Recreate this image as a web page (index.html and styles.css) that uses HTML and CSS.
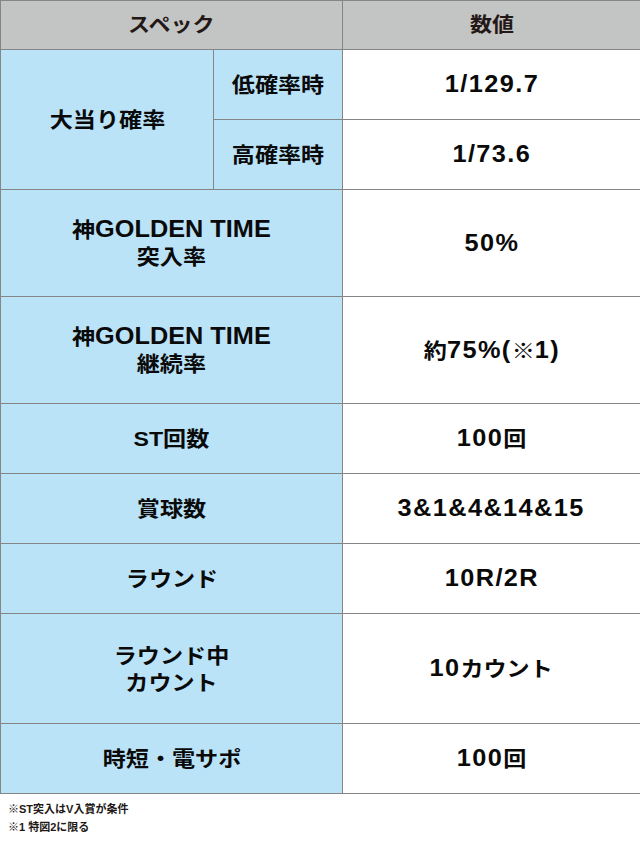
FILE: index.html
```html
<!DOCTYPE html>
<html lang="ja">
<head>
<meta charset="utf-8">
<title>スペック</title>
<link rel="stylesheet" href="styles.css">
</head>
<body>
<table class="spec">
  <colgroup>
    <col class="c1">
    <col class="c2">
    <col class="c3">
  </colgroup>
  <tr class="h-head">
    <th class="head" colspan="2"><span class="t">スペック</span></th>
    <th class="head"><span class="t">数値</span></th>
  </tr>
  <tr class="h70">
    <th class="label" rowspan="2"><span class="t">大当り確率</span></th>
    <th class="label"><span class="t">低確率時</span></th>
    <td class="val"><span class="t num">1/129.7</span></td>
  </tr>
  <tr class="h70">
    <th class="label"><span class="t">高確率時</span></th>
    <td class="val"><span class="t num">1/73.6</span></td>
  </tr>
  <tr class="h107">
    <th class="label" colspan="2"><span class="t two">神<span class="latin">GOLDEN TIME</span><br>突入率</span></th>
    <td class="val"><span class="t num">50%</span></td>
  </tr>
  <tr class="h107">
    <th class="label" colspan="2"><span class="t two">神<span class="latin">GOLDEN TIME</span><br>継続率</span></th>
    <td class="val"><span class="t num"><span class="jp">約</span>75%(<span class="jp">※</span>1)</span></td>
  </tr>
  <tr class="h70">
    <th class="label" colspan="2"><span class="t">ST回数</span></th>
    <td class="val"><span class="t num">100<span class="jp">回</span></span></td>
  </tr>
  <tr class="h70">
    <th class="label" colspan="2"><span class="t">賞球数</span></th>
    <td class="val"><span class="t num">3&amp;1&amp;4&amp;14&amp;15</span></td>
  </tr>
  <tr class="h70">
    <th class="label" colspan="2"><span class="t">ラウンド</span></th>
    <td class="val"><span class="t num">10R/2R</span></td>
  </tr>
  <tr class="h110">
    <th class="label" colspan="2"><span class="t two">ラウンド中<br>カウント</span></th>
    <td class="val"><span class="t num">10<span class="jp">カウント</span></span></td>
  </tr>
  <tr class="h70">
    <th class="label" colspan="2"><span class="t">時短・電サポ</span></th>
    <td class="val"><span class="t num">100<span class="jp">回</span></span></td>
  </tr>
</table>
<div class="notes">
  <p class="note">※ST突入はV入賞が条件</p>
  <p class="note">※1 特図2に限る</p>
</div>
</body>
</html>
```

FILE: styles.css
```css
html, body {
  margin: 0;
  padding: 0;
  background: #ffffff;
}

body {
  width: 640px;
  font-family: "Liberation Sans", "Noto Sans CJK JP", sans-serif;
  font-weight: bold;
  color: #0a0a0a;
}

.spec {
  width: 640px;
  border-collapse: collapse;
  table-layout: fixed;
}

.c1 { width: 213px; }
.c2 { width: 129px; }
.c3 { width: 298px; }

.spec th,
.spec td {
  border: 1px solid #858585;
  padding: 0;
  text-align: center;
  vertical-align: middle;
  font-weight: bold;
}

.h-head { height: 49px; }
.h70 { height: 70px; }
.h107 { height: 107px; }
.h110 { height: 110px; }

.head {
  background: #c3c4c4;
  color: #231815;
  font-size: 20px;
}

.label {
  background: #bae3f8;
  color: #0a0a0a;
  font-size: 21px;
}

.val {
  background: #ffffff;
  color: #0a0a0a;
  font-size: 23px;
}

.t {
  display: inline-block;
  transform: scaleX(1.1);
  line-height: 1;
}

.two {
  line-height: 27px;
  font-size: 21px;
}

.latin {
  font-size: 23px;
}

.num {
  letter-spacing: 1.3px;
}

.jp {
  font-size: 21px;
  letter-spacing: 0;
}

.notes {
  padding: 6px 0 0 8px;
}

.note {
  margin: 0;
  font-size: 11px;
  line-height: 18px;
  color: #231815;
}
```
